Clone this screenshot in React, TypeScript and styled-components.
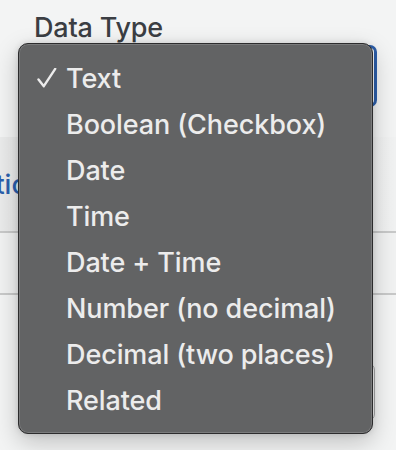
import React from 'react';
import styled, { createGlobalStyle } from 'styled-components';

const GlobalStyle = createGlobalStyle`
  html, body {
    margin: 0;
    padding: 0;
    background: #f3f4f4;
    font-family: Inter, "Noto Sans", "Liberation Sans", sans-serif;
    -webkit-font-smoothing: antialiased;
  }
`;

const types = [
  'Text',
  'Boolean (Checkbox)',
  'Date',
  'Time',
  'Date + Time',
  'Number (no decimal)',
  'Decimal (two places)',
  'Related'
];

const App: React.FC = () => {
  const selected = 'Text';

  return (
    <>
      <GlobalStyle />
      <Page>
        <Label>Data Type</Label>
        <Select />
        <TabBar>
          <Tab>Options</Tab>
        </TabBar>
        <Row />
        <Input />

        <Menu>
          {types.map((type) => (
            <Item key={type}>
              <CheckSlot>
                {type === selected && (
                  <svg width="20" height="20" viewBox="0 0 20 20">
                    <path
                      d="M1.5 11.5 L6.8 18.2 L18.2 0.8"
                      fill="none"
                      stroke="#ececec"
                      strokeWidth="2.4"
                      strokeLinecap="round"
                      strokeLinejoin="round"
                    />
                  </svg>
                )}
              </CheckSlot>
              {type}
            </Item>
          ))}
        </Menu>
      </Page>
    </>
  );
};

const Page = styled.div`
  position: relative;
  width: 396px;
  height: 450px;
  overflow: hidden;
  display: flex;
  flex-direction: column;
`;

const Label = styled.div`
  padding: 12px 0 0 34px;
  font-size: 27px;
  font-weight: 500;
  letter-spacing: -0.2px;
  line-height: 32px;
  color: #3b3e43;
`;

const Select = styled.div`
  margin: 1px 19px 0 20px;
  height: 56px;
  border: 3px solid #2d5fab;
  border-radius: 7px;
  background: #ffffff;
`;

const TabBar = styled.div`
  margin-top: 30px;
  height: 94px;
  display: flex;
  align-items: center;
  background: linear-gradient(90deg, #eaebeb, #eeefef 70%, #f1f2f2);
  border-bottom: 2px solid #c8c9c9;
`;

const Tab = styled.span`
  margin-left: -42px;
  font-size: 27px;
  font-weight: 500;
  color: #2b5fad;
`;

const Row = styled.div`
  height: 60px;
  background: #f1f2f2;
  border-bottom: 2px solid #c8c9c9;
`;

const Input = styled.div`
  margin: 68px 21px 0 20px;
  height: 56px;
  border: 1px solid #a6a7a8;
  border-radius: 7px;
  background: #f7f7f7;
`;

const Menu = styled.div`
  position: absolute;
  top: 43px;
  left: 18px;
  width: 355px;
  box-sizing: border-box;
  padding: 11px 0 10px;
  background: #626364;
  border: 1px solid #2c2c2d;
  border-radius: 10px;
  box-shadow:
    inset 0 0 0 1px #7a7b7c,
    0 8px 24px rgba(0, 0, 0, 0.22),
    0 0 6px rgba(0, 0, 0, 0.12);
`;

const Item = styled.div`
  display: flex;
  align-items: center;
  height: 46px;
  font-size: 27px;
  font-weight: 500;
  letter-spacing: -0.1px;
  color: #ececec;
  white-space: nowrap;
`;

const CheckSlot = styled.span`
  display: flex;
  align-items: center;
  width: 47px;
  padding-left: 18px;
  box-sizing: border-box;
`;

export default App;
